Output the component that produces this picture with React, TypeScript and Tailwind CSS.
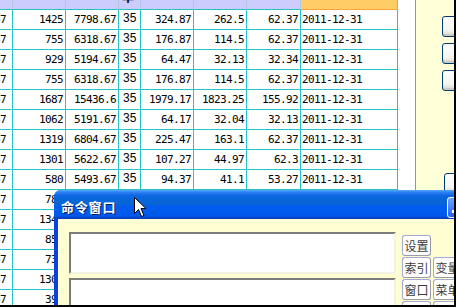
import React from "react";

const rows: string[][] = [
  ["32.67", "1425", "7798.67", "35", "324.87", "262.5", "62.37", "2011-12-31"],
  ["32.67", "755", "6318.67", "35", "176.87", "114.5", "62.37", "2011-12-31"],
  ["32.67", "929", "5194.67", "35", "64.47", "32.13", "32.34", "2011-12-31"],
  ["32.67", "755", "6318.67", "35", "176.87", "114.5", "62.37", "2011-12-31"],
  ["32.67", "1687", "15436.6", "35", "1979.17", "1823.25", "155.92", "2011-12-31"],
  ["32.67", "1062", "5191.67", "35", "64.17", "32.04", "32.13", "2011-12-31"],
  ["32.67", "1319", "6804.67", "35", "225.47", "163.1", "62.37", "2011-12-31"],
  ["32.67", "1301", "5622.67", "35", "107.27", "44.97", "62.3", "2011-12-31"],
  ["32.67", "580", "5493.67", "35", "94.37", "41.1", "53.27", "2011-12-31"],
  ["32.67", "786", "5193.67", "35", "64.47", "32.1", "32.37", "2011-12-31"],
  ["32.67", "1345", "6318.67", "35", "176.87", "114.5", "62.37", "2011-12-31"],
  ["32.67", "851", "5194.67", "35", "64.47", "32.13", "32.34", "2011-12-31"],
  ["32.67", "733", "6318.67", "35", "176.87", "114.5", "62.37", "2011-12-31"],
  ["32.67", "1302", "5622.67", "35", "107.27", "44.97", "62.3", "2011-12-31"],
  ["32.67", "398", "5493.67", "35", "94.37", "41.1", "53.27", "2011-12-31"],
];

const widths = ["w-[54px]", "w-[53px]", "w-[53px]", "w-[22px]", "w-[53px]", "w-[53px]", "w-[54px]", "w-[97px]"];

const mono = "font-['DejaVu_Sans_Mono',monospace] text-[11px] tracking-[-0.62px]";

function Cell({ i, v }: { i: number; v: string }) {
  const base = `${widths[i]} shrink-0 h-[19px] border-r border-[#22c4c8] overflow-hidden whitespace-nowrap`;
  if (i === 3) {
    return (
      <div className={`${base} pl-[4px] font-['Liberation_Sans',Arial,sans-serif] text-[12px] leading-[17px]`}>{v}</div>
    );
  }
  if (i === 7) {
    return <div className={`${base} pl-[1px] ${mono} leading-[19px]`}>{v}</div>;
  }
  if (i === 0) {
    return <div className={`${base} pr-[6px] text-right ${mono} leading-[19px]`}>{v}</div>;
  }
  return <div className={`${base} pr-[2px] text-right ${mono} leading-[19px]`}>{v}</div>;
}

function SideBtn({ label }: { label: string }) {
  return (
    <div className="w-[29px] h-[21px] bg-white border border-[#a4a8d4] border-r-[#9a9aa8] border-b-[#9a9aa8] rounded-[3px] text-[12px] leading-[19px] text-[#3c3c3c] font-['Noto_Sans_CJK_SC',sans-serif] text-center overflow-hidden whitespace-nowrap">
      {label}
    </div>
  );
}

function XpBtn({ extra }: { extra?: string }) {
  return (
    <div
      className={`w-[30px] h-[21px] rounded-[3px] border border-[#003c74] bg-[linear-gradient(to_bottom,#ffffff,#f4f4f0_70%,#d6d2c6)] shadow-[inset_0_-2px_0_#cdcac0] ${extra ?? ""}`}
    />
  );
}

export default function App() {
  return (
    <div className="w-[456px] h-[307px] bg-black overflow-hidden">
      <div className="relative w-[454px] h-[305px] bg-white overflow-hidden flex">
        {/* table */}
        <div className="w-[398px] shrink-0 overflow-hidden">
          <div className="ml-[-41px] w-[439px]">
            <div className="flex h-[10px]">
              {widths.map((w, i) =>
                i === 7 ? (
                  <div key={i} className={`${w} shrink-0 h-[10px] bg-[#ffcc66] border-r border-b border-[#f7a23a]`} />
                ) : (
                  <div
                    key={i}
                    className={`${w} shrink-0 h-[10px] bg-[#ccccff] border-r border-[#b4c8e4] border-b border-b-[#22c4c8] overflow-hidden`}
                  >
                    {i === 3 && (
                      <div className="-translate-y-[9px] pl-[3px] text-[12px] leading-[12px] font-bold font-['Noto_Sans_CJK_SC',sans-serif] text-black">
                        率
                      </div>
                    )}
                  </div>
                )
              )}
            </div>
            {rows.map((r, ri) => (
              <div key={ri} className="flex border-b border-[#22c4c8] text-black">
                {r.map((v, i) => (
                  <Cell key={i} i={i} v={v} />
                ))}
              </div>
            ))}
          </div>
        </div>
        {/* white gap */}
        <div className="w-[17px] shrink-0 bg-white" />
        <div className="w-[1px] shrink-0 bg-[#7f9db9]" />
        {/* right panel */}
        <div className="w-[38px] shrink-0 bg-[#ffffd8] pl-[26px] pt-[16px] flex flex-col gap-[6px]">
          <XpBtn />
          <XpBtn />
          <XpBtn />
          <XpBtn extra="mt-[76px] ml-[2px]" />
        </div>

        {/* command window */}
        <div className="absolute left-[54px] top-[190px] w-[420px] h-[130px] rounded-tl-[7px] overflow-hidden bg-[#0842d8]">
          <div className="relative h-[29px] bg-[linear-gradient(to_bottom,#5aa6ff_0px,#3084f4_2px,#1468e6_5px,#0a66dc_7px,#0866d4_14px,#005cf0_16px,#0058ec_26px,#0a3fc0_28px)] pl-[7px] pt-[10px]">
            <div className="text-white font-bold text-[13px] leading-[13px] tracking-[0.8px] font-['Noto_Sans_CJK_SC',sans-serif] [text-shadow:1px_1px_0_#0a1e60]">
              命令窗口
            </div>
            <div className="absolute left-[393px] top-[7px] w-[21px] h-[21px] rounded-[3px] border border-white bg-[linear-gradient(to_bottom,#6fa2ff,#2463e8)]">
              <div className="absolute left-[4px] bottom-[4px] w-[6px] h-[3px] bg-white" />
            </div>
            <svg className="absolute left-[80px] top-[7px]" width="13" height="21" viewBox="0 0 13 21">
              <path
                d="M0.5 0.5 L0.5 16.5 L4.5 12.5 L7.5 19.5 L10 18.5 L7 11.5 L12 11.5 Z"
                fill="#ffffff"
                stroke="#000000"
                strokeWidth="1"
                strokeLinejoin="miter"
              />
            </svg>
          </div>
          <div className="ml-[4px] h-[101px] bg-[#fffdd2] flex pl-[11px] pt-[13px]">
            <div className="w-[327px] shrink-0 flex flex-col gap-[4px]">
              <div className="h-[53px] bg-white border-2 border-t-[#7c7c7c] border-l-[#7c7c7c] border-r-[#f4f2e2] border-b-[#f4f2e2]" />
              <div className="h-[53px] bg-white border-2 border-t-[#7c7c7c] border-l-[#7c7c7c] border-r-[#f4f2e2] border-b-[#f4f2e2]" />
            </div>
            <div className="ml-[6px] mt-[3px] grid grid-cols-[29px_29px] gap-x-[2px] gap-y-[1px] content-start">
              <SideBtn label="设置" />
              <div />
              <SideBtn label="索引" />
              <SideBtn label="变量" />
              <SideBtn label="窗口" />
              <SideBtn label="菜单" />
              <SideBtn label="撤销" />
              <SideBtn label="帮助" />
            </div>
          </div>
        </div>
      </div>
    </div>
  );
}
